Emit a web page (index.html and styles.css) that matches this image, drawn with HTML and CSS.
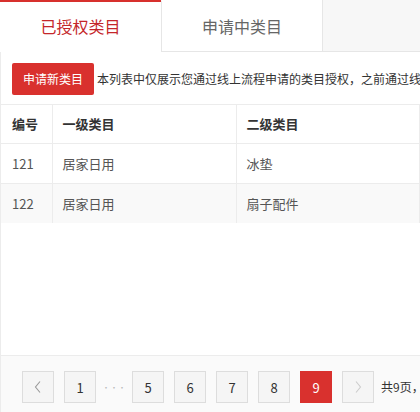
FILE: index.html
```html
<!DOCTYPE html>
<html lang="zh-CN">
<head>
<meta charset="utf-8">
<title>类目管理</title>
<link rel="stylesheet" href="styles.css">
</head>
<body>
<div class="page">
  <div class="tabs">
    <div class="tab active">已授权类目</div>
    <div class="tab">申请中类目</div>
    <div class="tab-rest"></div>
  </div>
  <div class="panel">
    <div class="toolbar">
      <button class="btn-primary">申请新类目</button>
      <span class="tip">本列表中仅展示您通过线上流程申请的类目授权，之前通过线</span>
    </div>
    <table class="grid">
      <colgroup>
        <col class="c1"><col class="c2"><col class="c3">
      </colgroup>
      <thead>
        <tr><th>编号</th><th>一级类目</th><th>二级类目</th></tr>
      </thead>
      <tbody>
        <tr><td>121</td><td>居家日用</td><td>冰垫</td></tr>
        <tr class="alt"><td>122</td><td>居家日用</td><td>扇子配件</td></tr>
      </tbody>
    </table>
    <div class="spacer"></div>
    <div class="pager">
      <span class="pg arrow"><svg width="10" height="14" viewBox="0 0 10 14"><path d="M7 1.5 L2.5 7 L7 12.5" fill="none" stroke="#999" stroke-width="1.1"/></svg></span>
      <span class="pg">1</span>
      <span class="dots">···</span>
      <span class="pg">5</span>
      <span class="pg">6</span>
      <span class="pg">7</span>
      <span class="pg">8</span>
      <span class="pg current">9</span>
      <span class="pg arrow"><svg width="10" height="14" viewBox="0 0 10 14"><path d="M3 1.5 L7.5 7 L3 12.5" fill="none" stroke="#ccc" stroke-width="1.1"/></svg></span>
      <span class="total">共9页，</span>
    </div>
  </div>
</div>
</body>
</html>
```

FILE: styles.css
```css
* { box-sizing: border-box; }
html, body { margin: 0; padding: 0; }
body {
  width: 420px;
  height: 412px;
  overflow: hidden;
  background: #fff;
  font-family: "Noto Sans CJK SC", "Noto Sans", sans-serif;
  color: #333;
}
.page {
  width: 420px;
  height: 412px;
  display: flex;
  flex-direction: column;
}
.tabs {
  display: flex;
  height: 52px;
  flex: none;
}
.tab {
  width: 161px;
  height: 52px;
  display: flex;
  align-items: center;
  justify-content: center;
  font-size: 16px;
  color: #666;
  background: #fff;
  border-left: 1px solid #e6e6e6;
  border-bottom: 1px solid #e6e6e6;
  border-top: 2px solid transparent;
  padding-bottom: 1px;
}
.tab.active {
  width: 161px;
  color: #c4262a;
  border-left: none;
  border-bottom: 1px solid #fff;
  border-top: 2px solid #d7302d;
}
.tab-rest {
  flex: 1;
  background: #f7f7f7;
  border-left: 1px solid #e6e6e6;
  border-bottom: 1px solid #e6e6e6;
}
.panel {
  flex: 1;
  display: flex;
  flex-direction: column;
  border-left: 1px solid #ececec;
}
.toolbar {
  display: flex;
  align-items: center;
  padding: 11px 0 10px 11px;
  height: 53px;
  white-space: nowrap;
  overflow: hidden;
  border-bottom: 1px solid #ececec;
}
.btn-primary {
  width: 82px;
  height: 32px;
  border: none;
  border-radius: 2px;
  background: #d9312e;
  color: #fff;
  font-family: inherit;
  font-size: 12px;
  padding: 0;
  flex: none;
}
.tip {
  margin-left: 3px;
  font-size: 12px;
  color: #333;
}
.grid {
  width: 100%;
  border-collapse: collapse;
  table-layout: fixed;
  font-size: 13px;
}
.c1 { width: 51px; }
.c2 { width: 184px; }
.grid th, .grid td {
  text-align: left;
  padding: 0 0 0 10px;
  border-right: 1px solid #ececec;
  border-bottom: 1px solid #ececec;
  white-space: nowrap;
}
.grid th {
  height: 38px;
  font-weight: bold;
  color: #333;
}
.grid td {
  height: 40px;
  color: #555;
}
.grid th:first-child, .grid td:first-child { padding-left: 11px; }
.grid tbody tr:last-child td { border-bottom: none; }
.grid tr.alt td { background: #f9f9f9; }
.spacer { flex: 1; }
.pager {
  height: 57px;
  flex: none;
  background: #fafafa;
  border-top: 1px solid #ececec;
  display: flex;
  align-items: flex-start;
  padding: 15px 0 0 21px;
  white-space: nowrap;
  overflow: hidden;
}
.pg {
  width: 32px;
  height: 32px;
  border: 1px solid #ddd;
  background: #f5f5f5;
  display: flex;
  align-items: center;
  justify-content: center;
  font-size: 13px;
  color: #333;
  margin-right: 10px;
  flex: none;
}
.pg.current {
  background: #d9312e;
  border-color: #d9312e;
  color: #fff;
}
.dots {
  width: 16px;
  height: 32px;
  display: flex;
  align-items: center;
  justify-content: center;
  font-size: 8px;
  color: #bbb;
  margin-right: 10px;
  flex: none;
}
.total {
  height: 32px;
  line-height: 32px;
  font-size: 12px;
  color: #333;
  margin-left: -3px;
}
```
